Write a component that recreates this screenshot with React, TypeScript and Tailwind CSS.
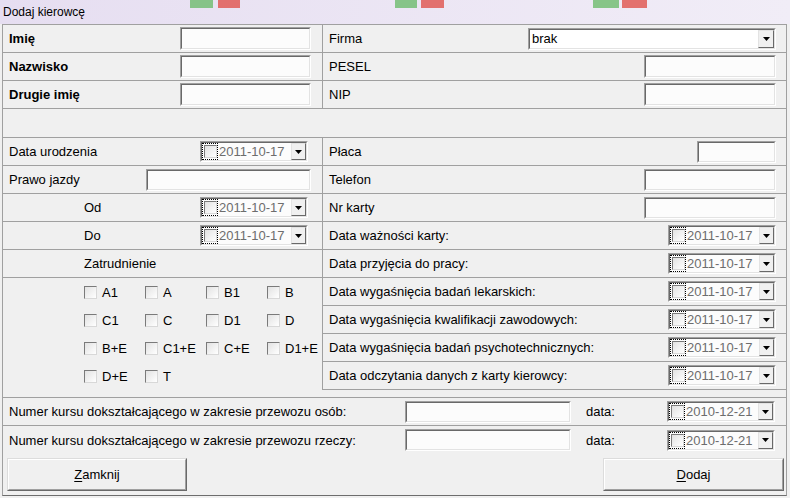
import React from 'react'

const Triangle = () => (
  <svg width="7" height="4" viewBox="0 0 7 4">
    <path d="M0 0H7L3.5 4Z" fill="#000" />
  </svg>
)

const DropButton = ({ className = '' }: { className?: string }) => (
  <div
    className={`flex items-center justify-center border border-t-[#e3e3e3] border-l-[#e3e3e3] border-b-[#696969] border-r-[#696969] bg-[#f0f0f0] ${className}`}
  >
    <Triangle />
  </div>
)

// Fixed3D border of WinForms text boxes
const Sunken = ({ className = '', children }: { className?: string; children?: React.ReactNode }) => (
  <div
    className={`border border-t-[#a0a0a0] border-l-[#a0a0a0] border-b-white border-r-white ${className}`}
  >
    <div className="h-full border border-t-[#696969] border-l-[#696969] border-b-[#e3e3e3] border-r-[#e3e3e3] bg-[#fcfcfc]">
      {children}
    </div>
  </div>
)

const TextBox = ({ className = '' }: { className?: string }) => <Sunken className={className} />

const CheckBox = () => (
  <div className="w-[13px] h-[13px] shrink-0 border border-t-[#7a7a7a] border-l-[#7a7a7a] border-b-[#d8d8d8] border-r-[#d8d8d8] bg-linear-to-br from-[#e2e2e2] to-white" />
)

const DatePicker = ({ value = '2011-10-17', className = '' }: { value?: string; className?: string }) => (
  <Sunken className={`h-[21px] w-[108px] ${className}`}>
    <div className="flex h-full items-center">
      <div className="flex h-full w-[16px] items-center justify-center border border-dotted border-black">
        <CheckBox />
      </div>
      <span className="ml-[1px] text-[#6d6d6d]">{value}</span>
      <DropButton className="ml-auto h-full w-[15px]" />
    </div>
  </Sunken>
)

const Row = ({ children, className = '', last = false }: { children: React.ReactNode; className?: string; last?: boolean }) => (
  <div className={`flex h-[28px] items-center ${last ? '' : 'border-b border-[#a0a0a0]'} ${className}`}>
    {children}
  </div>
)

const licences = ['A1', 'A', 'B1', 'B', 'C1', 'C', 'D1', 'D', 'B+E', 'C1+E', 'C+E', 'D1+E', 'D+E', 'T']

const rightRows: { label: string; control: React.ReactNode }[] = [
  { label: 'Płaca', control: <TextBox className="h-[22px] w-[79px]" /> },
  { label: 'Telefon', control: <TextBox className="h-[22px] w-[132px]" /> },
  { label: 'Nr karty', control: <TextBox className="h-[22px] w-[132px]" /> },
  { label: 'Data ważności karty:', control: <DatePicker /> },
  { label: 'Data przyjęcia do pracy:', control: <DatePicker /> },
  { label: 'Data wygaśnięcia badań lekarskich:', control: <DatePicker /> },
  { label: 'Data wygaśnięcia kwalifikacji zawodowych:', control: <DatePicker /> },
  { label: 'Data wygaśnięcia badań psychotechnicznych:', control: <DatePicker /> },
  { label: 'Data odczytania danych z karty kierowcy:', control: <DatePicker /> },
]

const Button = ({ hotkey, rest, className = '' }: { hotkey: string; rest: string; className?: string }) => (
  <div
    className={`h-[33px] border border-t-[#dcdcdc] border-l-[#dcdcdc] border-b-[#696969] border-r-[#696969] ${className}`}
  >
    <div className="flex h-full items-center justify-center border border-t-white border-l-white border-b-[#a0a0a0] border-r-[#a0a0a0] bg-[#f0f0f0]">
      <span>
        <span className="underline underline-offset-2">{hotkey}</span>
        {rest}
      </span>
    </div>
  </div>
)

export default function App() {
  return (
    <div className="flex h-[498px] w-[790px] flex-col overflow-hidden bg-[#f0f0f0] font-['Liberation_Sans',Arial,sans-serif] text-[13px] leading-none text-black">
      {/* Title bar */}
      <div className="relative h-[24px] shrink-0 bg-linear-to-r from-[#e6def1] to-[#f1edf7]">
        <div className="pointer-events-none absolute left-0 top-0 flex h-[8px] w-full">
          <div className="ml-[190px] h-full w-[23px] bg-[#6dbb6d]/80" />
          <div className="ml-[5px] h-full w-[22px] bg-[#e0524c]/80" />
          <div className="ml-[155px] h-full w-[22px] bg-[#6dbb6d]/80" />
          <div className="ml-[4px] h-full w-[23px] bg-[#e0524c]/80" />
          <div className="ml-[149px] h-full w-[26px] bg-[#6dbb6d]/80" />
          <div className="ml-[3px] h-full w-[25px] bg-[#e0524c]/80" />
        </div>
        <div className="relative flex h-[23px] items-center pl-[3px] text-[12px]">Dodaj kierowcę</div>
      </div>

      {/* Window body */}
      <div className="ml-[2px] flex h-[472px] w-[785px] flex-col border-x border-b border-x-[#a0a0a0] border-b-[#6d6d6d]">
        {/* Names */}
        <div className="border-t border-[#a0a0a0]">
          {[
            ['Imię', 'Firma'],
            ['Nazwisko', 'PESEL'],
            ['Drugie imię', 'NIP'],
          ].map(([left, right], i) => (
            <div key={left} className="flex h-[28px] border-b border-[#a0a0a0]">
              <div className="flex w-[320px] items-center justify-between border-r border-[#a0a0a0] pl-[6px] pr-[11px]">
                <span className="font-bold">{left}</span>
                <TextBox className="h-[23px] w-[131px]" />
              </div>
              <div className="flex flex-1 items-center justify-between pl-[6px] pr-[10px]">
                <span>{right}</span>
                {i === 0 ? (
                  <Sunken className="h-[22px] w-[248px]">
                    <div className="flex h-full items-center bg-white">
                      <span className="ml-[2px]">brak</span>
                      <DropButton className="ml-auto h-full w-[16px]" />
                    </div>
                  </Sunken>
                ) : (
                  <TextBox className="h-[23px] w-[132px]" />
                )}
              </div>
            </div>
          ))}
        </div>

        {/* Details */}
        <div className="mt-[28px] flex border-t border-[#a0a0a0]">
          <div className="flex w-[320px] flex-col border-r border-[#a0a0a0]">
            <Row className="justify-between pl-[6px] pr-[14px]">
              <span>Data urodzenia</span>
              <DatePicker className="w-[104px]" />
            </Row>
            <Row className="justify-between pl-[6px] pr-[11px]">
              <span>Prawo jazdy</span>
              <TextBox className="h-[22px] w-[165px]" />
            </Row>
            <Row className="justify-between pl-[81px] pr-[14px]">
              <span>Od</span>
              <DatePicker className="w-[104px]" />
            </Row>
            <Row className="justify-between pl-[81px] pr-[14px]">
              <span>Do</span>
              <DatePicker className="w-[104px]" />
            </Row>
            <Row className="pl-[81px]">
              <span>Zatrudnienie</span>
            </Row>
            <div className="grid h-[112px] grid-cols-[61px_61px_61px_61px] grid-rows-[28px_28px_28px_28px] pl-[81px]">
              {licences.map((l) => (
                <div key={l} className="flex items-center pt-[1px]">
                  <CheckBox />
                  <span className="ml-[5px]">{l}</span>
                </div>
              ))}
            </div>
          </div>
          <div className="flex flex-1 flex-col">
            {rightRows.map((r) => (
              <Row key={r.label} className="justify-between pl-[6px] pr-[10px]">
                <span>{r.label}</span>
                {r.control}
              </Row>
            ))}
          </div>
        </div>

        {/* Training courses */}
        <div className="mt-[7px] border-t border-[#a0a0a0]">
          {['osób', 'rzeczy'].map((what, i) => (
            <div
              key={what}
              className={`grid h-[28px] grid-cols-[402px_166px_96px_108px] items-center ${i === 0 ? 'border-b border-[#a0a0a0]' : ''}`}
            >
              <span className="pl-[6px]">Numer kursu dokształcającego w zakresie przewozu {what}:</span>
              <TextBox className="h-[22px] w-[166px]" />
              <span className="pl-[15px]">data:</span>
              <DatePicker value="2010-12-21" />
            </div>
          ))}
        </div>

        {/* Buttons */}
        <div className="mt-[4px] flex justify-between pl-[4px] pr-[2px]">
          <Button hotkey="Z" rest="amknij" className="w-[180px]" />
          <Button hotkey="D" rest="odaj" className="w-[181px]" />
        </div>
      </div>
    </div>
  )
}
